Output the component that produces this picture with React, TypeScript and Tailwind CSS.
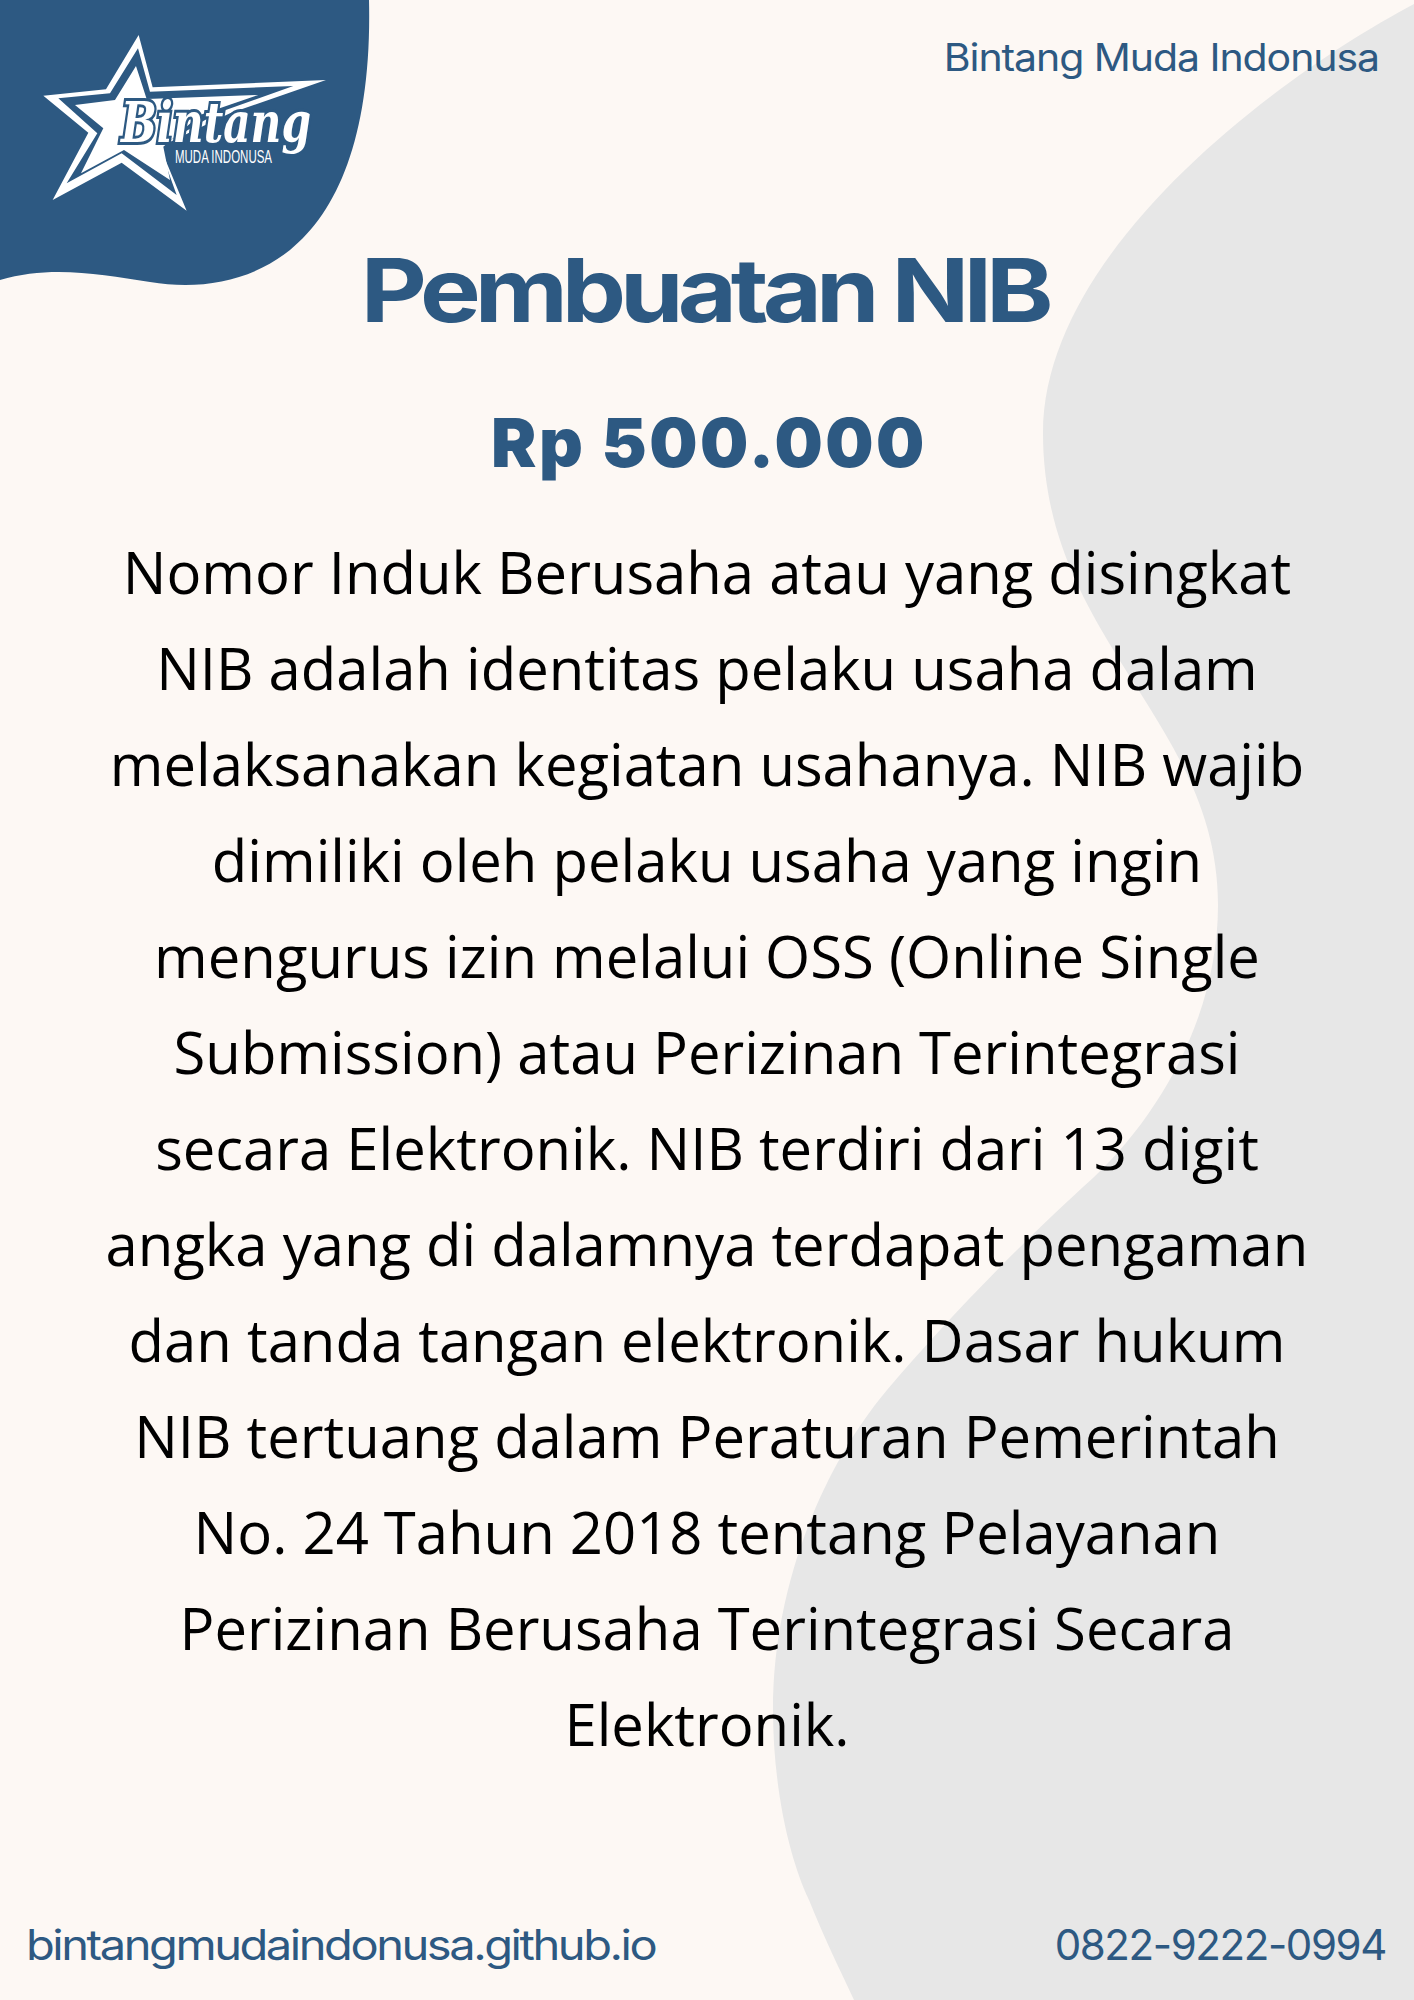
const bodyLines = [
  'Nomor Induk Berusaha atau yang disingkat',
  'NIB adalah identitas pelaku usaha dalam',
  'melaksanakan kegiatan usahanya. NIB wajib',
  'dimiliki oleh pelaku usaha yang ingin',
  'mengurus izin melalui OSS (Online Single',
  'Submission) atau Perizinan Terintegrasi',
  'secara Elektronik. NIB terdiri dari 13 digit',
  'angka yang di dalamnya terdapat pengaman',
  'dan tanda tangan elektronik. Dasar hukum',
  'NIB tertuang dalam Peraturan Pemerintah',
  'No. 24 Tahun 2018 tentang Pelayanan',
  'Perizinan Berusaha Terintegrasi Secara',
  'Elektronik.',
];

function Backdrop() {
  return (
    <svg className="absolute inset-0" width="1414" height="2000" viewBox="0 0 1414 2000">
      <path
        d="M1414 4C1280 75 1043 250 1043 433C1043 640 1218 720 1218 905C1218 1010 1165 1110 1093 1178C1030 1235 955 1310 887 1390C820 1470 773 1590 773 1709C773 1790 790 1860 809 1900C825 1940 840 1970 854 2000H1414Z"
        fill="#e7e7e7"
      />
      <path d="M0 0H369C372 130 340 210 290 250C250 282 200 290 150 282C100 274 50 265 0 280Z" fill="#2d5982" />
    </svg>
  );
}

function Logo() {
  return (
    <svg className="absolute left-0 top-0 overflow-visible" width="369" height="284" viewBox="0 0 369 284">
      <g transform="scale(0.3333)">
        <path d="M416 105L458 262L978 240L690 340L480 440L560 632L365 488L158 600L265 398L130 287L318 268Z" fill="#fff" />
        <path d="M414 145L450 275L880 258L650 340L478 440L530 585L365 460L200 550L292 400L175 295L330 280Z" fill="#2d5982" />
        <path d="M408 198L440 297L775 285L600 345L490 440L510 540L372 450L243 520L310 385L225 315L345 300Z" fill="#fff" />
      </g>
      <text
        x="216"
        y="142"
        textAnchor="middle"
        textLength="190"
        lengthAdjust="spacingAndGlyphs"
        fill="#fff"
        stroke="#2d5982"
        strokeWidth="6"
        paintOrder="stroke"
        className="italic font-bold text-[56px] font-['DejaVu_Serif',serif]"
      >
        Bintang
      </text>
      <text
        x="175"
        y="163"
        textLength="97"
        lengthAdjust="spacingAndGlyphs"
        fill="#fff"
        className="text-[19px] font-['Liberation_Sans',sans-serif]"
      >
        MUDA INDONUSA
      </text>
    </svg>
  );
}

export default function App() {
  return (
    <div className="relative w-[1414px] h-[2000px] overflow-hidden bg-[#fdf8f4] font-['Inter',sans-serif] text-[#2d5982]">
      <Backdrop />
      <Logo />
      <div className="relative flex flex-col h-full">
        <div className="flex justify-end pt-[34px] pr-[35px] text-[38px] leading-[46px] tracking-[-1px]">
          <span className="inline-block origin-right scale-x-[1.08]">Bintang Muda Indonusa</span>
        </div>
        <h1 className="mt-[155px] pr-[5px] text-center text-[88px] leading-[110px] font-bold tracking-[-5.2px]">
          <span className="inline-block scale-x-[1.16]">Pembuatan NIB</span>
        </h1>
        <div className="mt-[52px] pl-[4px] text-center text-[68px] leading-[90px] font-black tracking-[2.5px]">
          Rp 500.000
        </div>
        <div className="mt-[37px] text-center text-[58px] leading-[96px] text-black font-['Open_Sans',sans-serif]">
          {bodyLines.map((line) => (
            <div key={line}>{line}</div>
          ))}
        </div>
        <div className="mt-auto flex justify-between pl-[26px] pr-[28px] pb-[30px] text-[42px] leading-[50px]">
          <span className="inline-block origin-left scale-x-[1.12] tracking-[-2.2px]">bintangmudaindonusa.github.io</span>
          <span className="tracking-[-1.4px]">0822-9222-0994</span>
        </div>
      </div>
    </div>
  );
}
